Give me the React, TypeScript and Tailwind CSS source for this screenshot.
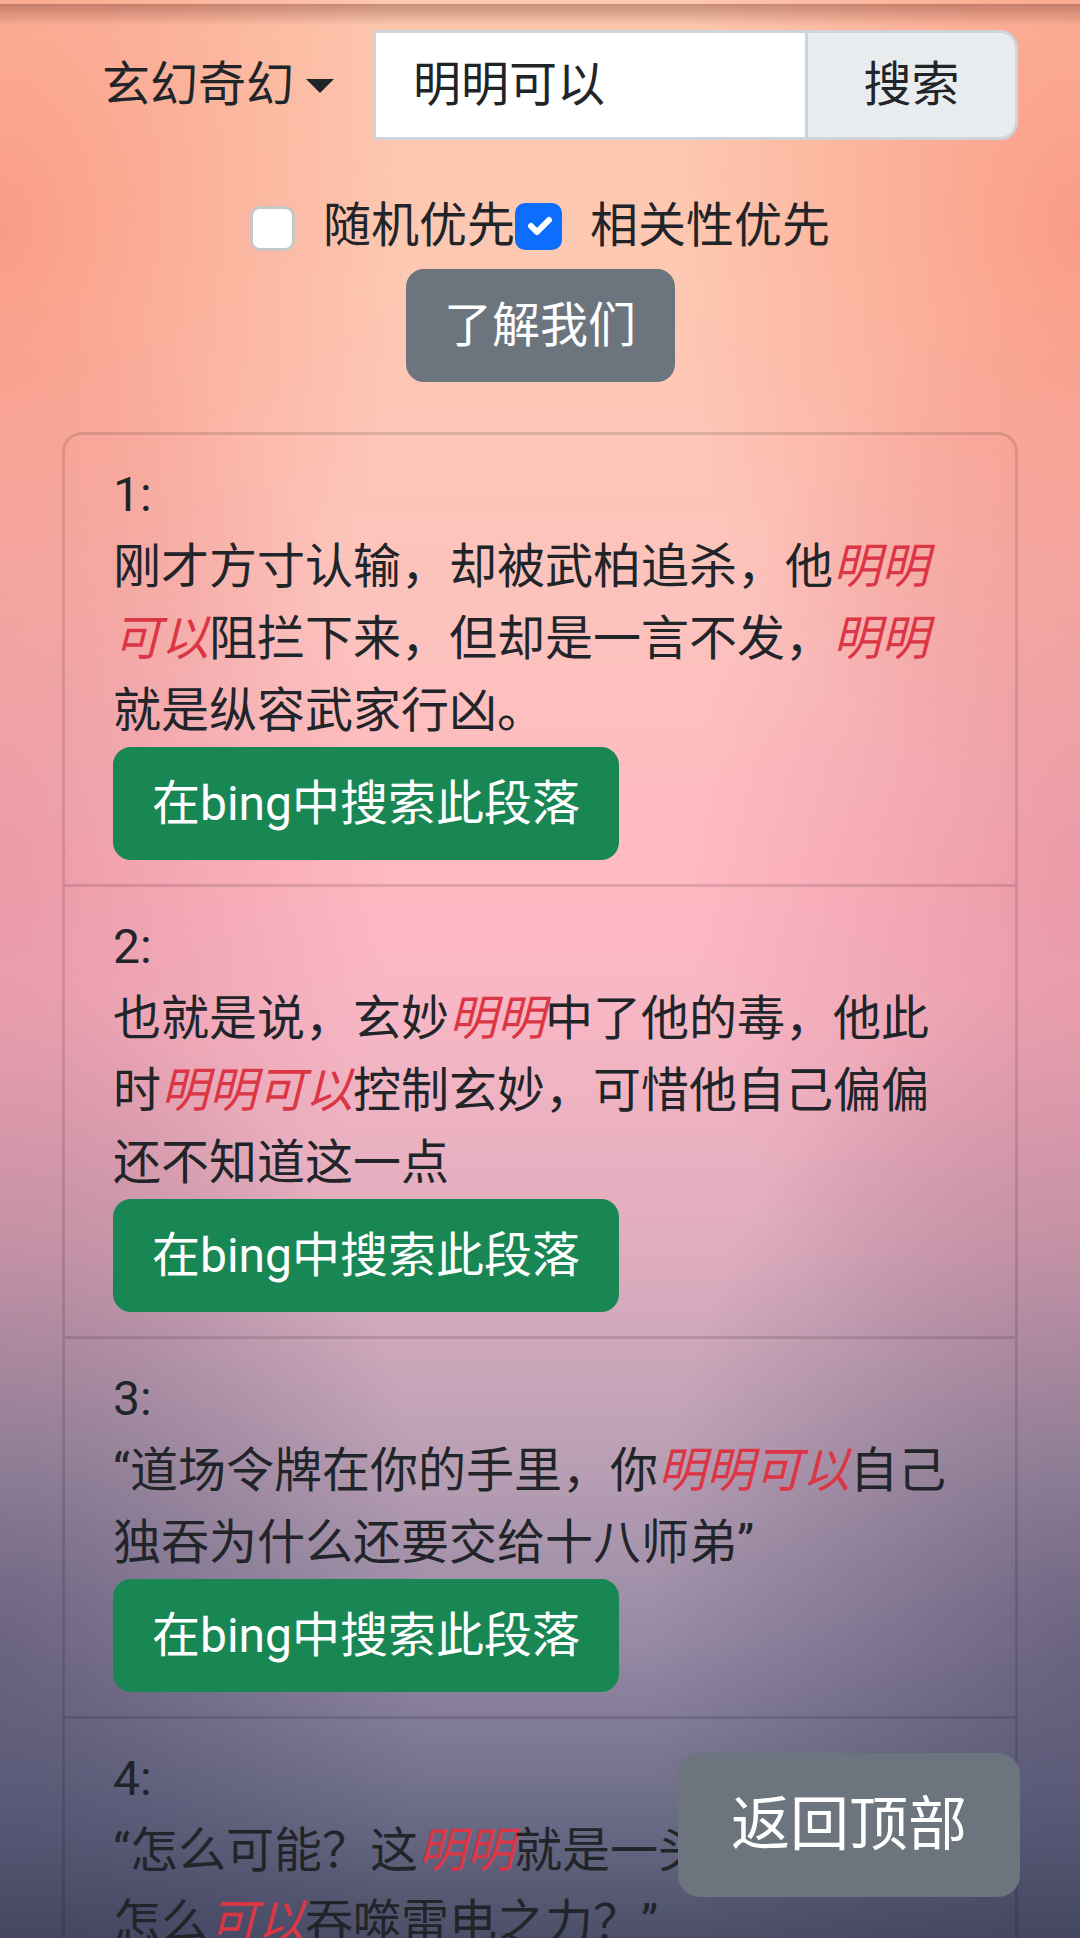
import React from "react";

type Part = [string, boolean];

const items: { n: number; parts: Part[] }[] = [
  {
    n: 1,
    parts: [
      ["刚才方寸认输，却被武柏追杀，他", false],
      ["明明可以", true],
      ["阻拦下来，但却是一言不发，", false],
      ["明明", true],
      ["就是纵容武家行凶。", false],
    ],
  },
  {
    n: 2,
    parts: [
      ["也就是说，玄妙", false],
      ["明明", true],
      ["中了他的毒，他此时", false],
      ["明明可以", true],
      ["控制玄妙，可惜他自己偏偏还不知道这一点", false],
    ],
  },
  {
    n: 3,
    parts: [
      ["“道场令牌在你的手里，你", false],
      ["明明可以", true],
      ["自己独吞为什么还要交给十八师弟”", false],
    ],
  },
  {
    n: 4,
    parts: [
      ["“怎么可能？这", false],
      ["明明", true],
      ["就是一头普通妖兽，怎么", false],
      ["可以", true],
      ["吞噬雷电之力？”", false],
    ],
  },
];

export default function App() {
  return (
    <div className="relative h-[1938px] w-full overflow-hidden font-[Roboto,'Noto_Sans_CJK_SC',sans-serif] text-[#212529] bg-[image:radial-gradient(ellipse_38%_30%_at_0%_12%,rgba(246,112,92,0.5),rgba(246,112,92,0)),radial-gradient(ellipse_38%_30%_at_100%_12%,rgba(246,112,92,0.5),rgba(246,112,92,0)),radial-gradient(ellipse_36%_30%_at_0%_45%,rgba(205,105,125,0.4),rgba(205,105,125,0)),radial-gradient(ellipse_36%_30%_at_100%_45%,rgba(205,105,125,0.4),rgba(205,105,125,0)),radial-gradient(ellipse_40%_35%_at_0%_85%,rgba(40,42,75,0.4),rgba(40,42,75,0)),radial-gradient(ellipse_40%_35%_at_100%_85%,rgba(40,42,75,0.4),rgba(40,42,75,0)),linear-gradient(to_bottom,#fdc6ad_0%,#fdc9b3_15%,#fcc2bd_32%,#ffb9c2_45%,#f6b6c4_53%,#deacbe_65%,#bba0b5_75%,#9689a4_85%,#6e6e8a_93%,#4c4f68_100%)]">
      {/* top shadow strip */}
      <div className="absolute left-0 right-0 top-[4px] h-[22px] bg-[linear-gradient(to_bottom,rgba(110,50,40,0.38),rgba(110,50,40,0))]" />

      <div className="mx-[62px] pt-[30px]">
        {/* search row */}
        <div className="flex h-[110px] items-stretch">
          <div className="flex w-[311px] items-center pl-[40px] text-[48px]">
            <span>玄幻奇幻</span>
            <span className="ml-[12px] mt-[2px] h-0 w-0 border-x-[14.5px] border-t-[14px] border-x-transparent border-t-[#212529]" />
          </div>
          <div className="flex flex-1 items-center border-[3px] border-r-0 border-[#ced4da] bg-white pl-[37px] text-[48px]">
            明明可以
          </div>
          <div className="flex w-[213px] items-center justify-center rounded-r-[18px] border-[3px] border-[#ced4da] bg-[#e9ecef] text-[48px]">
            搜索
          </div>
        </div>

        {/* checkbox row */}
        <div className="mt-[62px] flex h-[48px] items-center justify-center text-[48px]">
          <span className="mt-[4px] h-[45px] w-[45px] rounded-[10px] border-[3px] border-[rgba(0,0,0,0.22)] bg-white" />
          <span className="ml-[28px] leading-[48px]">随机优先</span>
          <span className="flex h-[47px] w-[47px] items-center justify-center rounded-[10px] bg-[#0d6efd]">
            <svg viewBox="0 0 20 20" className="h-[40px] w-[40px]">
              <path d="m6 10 3 3 6-6" fill="none" stroke="#fff" strokeWidth="3" strokeLinecap="round" strokeLinejoin="round" />
            </svg>
          </span>
          <span className="ml-[28px] leading-[48px]">相关性优先</span>
        </div>

        {/* about button */}
        <div className="mt-[19px] flex justify-center">
          <div className="flex h-[113px] w-[269px] items-center justify-center rounded-[18px] bg-[#6c757d] text-[48px] text-white">
            了解我们
          </div>
        </div>

        {/* results list */}
        <div className="mt-[50px] rounded-[20px] border-[3px] border-[rgba(0,0,0,0.12)]">
          {items.map((it, i) => (
            <div
              key={it.n}
              className={
                i === 0
                  ? "px-[48px] py-[24px] text-[48px] leading-[72px]"
                  : "border-t-[3px] border-[rgba(0,0,0,0.12)] px-[48px] py-[24px] text-[48px] leading-[72px]"
              }
            >
              <div>{it.n}:</div>
              <div>
                {it.parts.map((p, j) =>
                  p[1] ? (
                    <em key={j} className="italic text-[#dc3545]">
                      {p[0]}
                    </em>
                  ) : (
                    <span key={j}>{p[0]}</span>
                  )
                )}
              </div>
              <div className="flex h-[113px] w-[506px] items-center justify-center rounded-[18px] bg-[#198754] text-[48px] leading-none text-white">
                在bing中搜索此段落
              </div>
            </div>
          ))}
        </div>
      </div>

      {/* back to top */}
      <div className="absolute bottom-[41px] right-[60px] flex h-[144px] w-[342px] items-center justify-center rounded-[22px] bg-[#6c757d] text-[59px] text-white">
        返回顶部
      </div>
    </div>
  );
}
